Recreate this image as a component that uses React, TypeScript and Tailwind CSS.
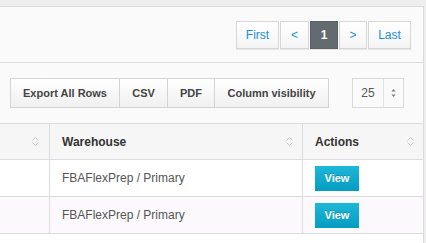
import React from 'react';

function SortIcon() {
  return (
    <svg width="9" height="13" viewBox="0 0 9 13" className="shrink-0">
      <path d="M1.5 5.5 L4.5 2.5 L7.5 5.5" fill="none" stroke="#c4c4c4" strokeWidth="1" />
      <path d="M1.5 7.5 L4.5 10.5 L7.5 7.5" fill="none" stroke="#c4c4c4" strokeWidth="1" />
    </svg>
  );
}

const pages = [
  { label: 'First', w: 'w-[43px]' },
  { label: '<', w: 'w-[29px]' },
  { label: '1', w: 'w-[28px]', active: true },
  { label: '>', w: 'w-[28px]' },
  { label: 'Last', w: 'w-[43px]' },
];

const exportButtons = [
  { label: 'Export All Rows', w: 'w-[110px]' },
  { label: 'CSV', w: 'w-[49px]' },
  { label: 'PDF', w: 'w-[48px]' },
  { label: 'Column visibility', w: 'w-[115px]' },
];

const rows = ['FBAFlexPrep / Primary', 'FBAFlexPrep / Primary'];

export default function App() {
  return (
    <div className="h-[243px] overflow-hidden bg-[#eeeeee] pt-[6px] pr-[2px] font-['Liberation_Sans',Arial,sans-serif]">
      <div className="border-t border-r border-[#dadada] bg-[#fafafa] h-full">
        {/* Pagination header */}
        <div className="h-[56px] flex items-center justify-end pr-[12px] border-b border-[#dadada] bg-[#fafafa]">
          <div className="flex gap-[1px]">
            {pages.map((p) => (
              <div
                key={p.label}
                className={`${p.w} h-[28px] flex items-center justify-center text-[12px] border shadow-[0_1px_0_#e6e6e6] ${
                  p.active
                    ? 'bg-[#646b70] border-[#5a6064] text-white font-bold'
                    : 'bg-gradient-to-b from-white to-[#f4f4f4] border-[#d6d6d6] text-[#1b8fd0]'
                }`}
              >
                {p.label}
              </div>
            ))}
          </div>
        </div>

        {/* Buttons row */}
        <div className="flex items-center justify-between pl-[10px] pr-[19px] pt-[15px] pb-[15px] bg-[#fafafa]">
          <div className="flex">
            {exportButtons.map((b, i) => (
              <div
                key={b.label}
                className={`${b.w} h-[30px] flex items-center justify-center text-[11px] font-bold text-[#444] border border-[#d4d4d4] bg-gradient-to-b from-white to-[#f0f0f0] ${
                  i > 0 ? '-ml-px' : ''
                }`}
              >
                {b.label}
              </div>
            ))}
          </div>
          <div className="w-[52px] h-[30px] flex border border-[#d9d9d9] bg-[#fafafa]">
            <div className="w-[31px] flex items-center justify-center text-[12px] text-[#555] border-r border-[#e2e2e2]">
              25
            </div>
            <div className="flex-1 flex items-center justify-center">
              <svg width="5" height="10" viewBox="0 0 5 10">
                <path d="M0.5 3.5 L2.5 1 L4.5 3.5 Z" fill="#7a7a7a" />
                <path d="M0.5 6.5 L2.5 9 L4.5 6.5 Z" fill="#7a7a7a" />
              </svg>
            </div>
          </div>
        </div>

        {/* Table */}
        <div className="bg-white h-full">
          <div className="flex h-[37px] border-t border-b border-[#dcdcdc] bg-[#f6f6f6] text-[12px] font-bold text-[#333]">
            <div className="w-[50px] border-r border-[#dcdcdc] flex items-center justify-end pr-[9px]">
              <SortIcon />
            </div>
            <div className="w-[253px] border-r border-[#dcdcdc] flex items-center justify-between pl-[12px] pr-[8px]">
              <span>Warehouse</span>
              <SortIcon />
            </div>
            <div className="flex-1 flex items-center justify-between pl-[12px] pr-[8px]">
              <span>Actions</span>
              <SortIcon />
            </div>
          </div>
          {rows.map((r, i) => (
            <div
              key={i}
              className={`flex h-[37px] border-b border-[#dcdcdc] text-[12px] text-[#555] ${
                i % 2 === 1 ? 'bg-[#fbf9fb]' : 'bg-white'
              }`}
            >
              <div className="w-[50px] border-r border-[#dcdcdc]" />
              <div className="w-[253px] border-r border-[#dcdcdc] flex items-center pl-[12px]">{r}</div>
              <div className="flex-1 flex items-center pl-[12px]">
                <div className="w-[44px] h-[25px] flex items-center justify-center bg-gradient-to-b from-[#1cb8da] to-[#049cc0] text-white text-[11px] font-bold [text-shadow:0_-1px_0_rgba(0,0,0,0.2)]">
                  View
                </div>
              </div>
            </div>
          ))}
        </div>
      </div>
    </div>
  );
}
